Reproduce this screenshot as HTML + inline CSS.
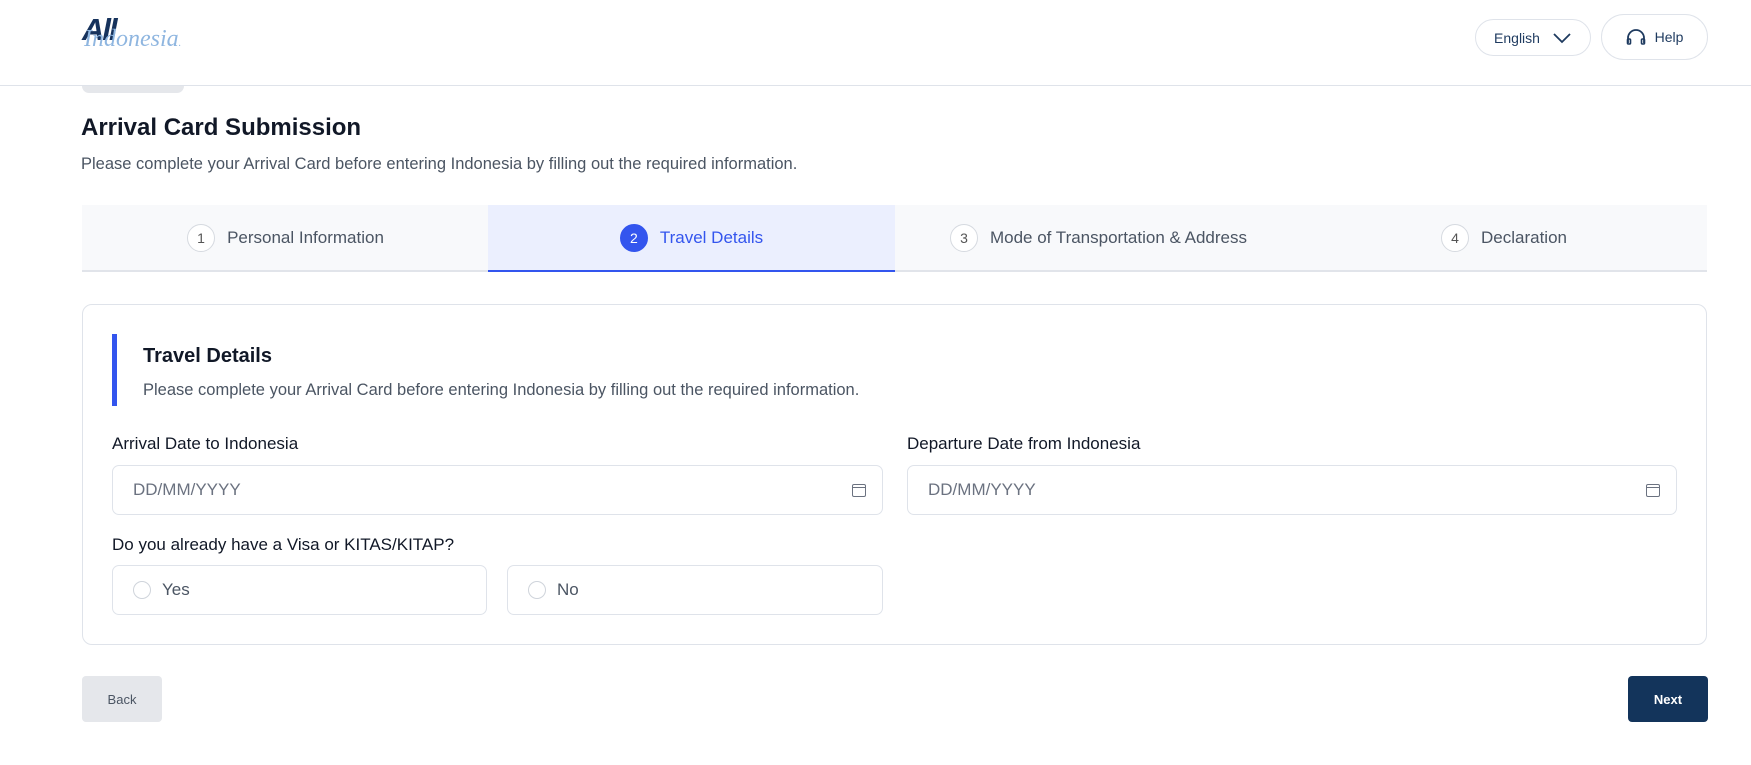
<!DOCTYPE html>
<html><head><meta charset="utf-8"><style>
*{box-sizing:border-box;margin:0;padding:0}
body{width:1751px;height:765px;overflow:hidden;background:#fff;font-family:"Liberation Sans",Arial,sans-serif;position:relative;color:#111827}
.a{position:absolute}
.hdr{left:0;top:0;width:1751px;height:86px;border-bottom:1px solid #dfe3ea;background:#fff}
.pill{border:1px solid #dfe3ea;border-radius:30px;display:flex;align-items:center;justify-content:center;font-size:14px;color:#1e3a5f}
.step{top:205px;height:67px;width:407px;background:#f8f9fb;border-bottom:2px solid #e1e4ea;display:flex;align-items:center;justify-content:center;font-size:17px;color:#4b5563}
.num{width:28px;height:28px;border-radius:50%;border:1px solid #d6dae0;display:inline-flex;align-items:center;justify-content:center;font-size:14px;margin-right:12px;color:#555;background:#fff}
.card{left:82px;top:304px;width:1625px;height:341px;border:1px solid #dfe3ea;border-radius:10px}
.lbl{font-size:17px;color:#111827}
.inp{height:50px;border:1px solid #dfe3ea;border-radius:7px;font-size:17px;color:#6b7280;display:flex;align-items:center;padding-left:20px}
.cal{position:absolute;right:16px;top:18px;width:14px;height:13px;border:1.5px solid #6b7280;border-radius:2px}
.cal:before{content:"";position:absolute;left:0;right:0;top:2px;border-top:1.5px solid #6b7280}
.rad{width:18px;height:18px;border:1px solid #cfd4db;border-radius:50%;margin-right:11px}
</style></head><body>
<div class="a hdr"></div>
<div class="a" style="left:82px;top:12px;font-size:31px;font-weight:bold;color:#16325c;letter-spacing:-2px;font-style:italic">All</div>
<div class="a" style="left:84px;top:26px;font-size:24px;font-style:italic;color:#8fb6e0;font-family:'Liberation Serif',serif">Indonesia<span style="font-size:10px">.</span></div>
<div class="a pill" style="left:1475px;top:19px;width:116px;height:37px">English <svg width="20" height="12" style="margin-left:12px" viewBox="0 0 20 12"><path d="M2 2l8 8 8-8" fill="none" stroke="#1e3a5f" stroke-width="1.8"/></svg></div>
<div class="a pill" style="left:1601px;top:14px;width:107px;height:46px"><svg width="20" height="18" viewBox="0 0 20 18" style="margin-right:9px"><path d="M2 15V10a8 8 0 0116 0v5" fill="none" stroke="#1e3a5f" stroke-width="1.8"/><rect x="1.5" y="11" width="3" height="5" rx="1" fill="none" stroke="#1e3a5f" stroke-width="1.6"/><rect x="15.5" y="11" width="3" height="5" rx="1" fill="none" stroke="#1e3a5f" stroke-width="1.6"/></svg>Help</div>
<div class="a" style="left:82px;top:86px;width:102px;height:7px;background:#e5e7eb;border-radius:0 0 10px 10px"></div>
<div class="a" style="left:81px;top:114px;font-size:24px;font-weight:bold;color:#111827">Arrival Card Submission</div>
<div class="a" style="left:81px;top:155px;font-size:16.5px;color:#4b5563">Please complete your Arrival Card before entering Indonesia by filling out the required information.</div>
<div class="a step" style="left:82px"><span class="num">1</span>Personal Information</div>
<div class="a step" style="left:488px;background:#ebeffe;border-bottom:2px solid #3355ee;color:#3355ee"><span class="num" style="background:#3355ee;border-color:#3355ee;color:#fff">2</span>Travel Details</div>
<div class="a step" style="left:895px"><span class="num">3</span>Mode of Transportation &amp; Address</div>
<div class="a step" style="left:1301px;width:406px"><span class="num">4</span>Declaration</div>
<div class="a card"></div>
<div class="a" style="left:112px;top:334px;width:5px;height:72px;background:#3355ee"></div>
<div class="a" style="left:143px;top:345px;font-size:20px;font-weight:bold">Travel Details</div>
<div class="a" style="left:143px;top:381px;font-size:16.5px;color:#4b5563">Please complete your Arrival Card before entering Indonesia by filling out the required information.</div>
<div class="a lbl" style="left:112px;top:434px">Arrival Date to Indonesia</div>
<div class="a lbl" style="left:907px;top:434px">Departure Date from Indonesia</div>
<div class="a inp" style="left:112px;top:465px;width:771px">DD/MM/YYYY<span class="cal"></span></div>
<div class="a inp" style="left:907px;top:465px;width:770px">DD/MM/YYYY<span class="cal"></span></div>
<div class="a lbl" style="left:112px;top:535px">Do you already have a Visa or KITAS/KITAP?</div>
<div class="a inp" style="left:112px;top:565px;width:375px;color:#4b5563"><span class="rad"></span>Yes</div>
<div class="a inp" style="left:507px;top:565px;width:376px;color:#4b5563"><span class="rad"></span>No</div>
<div class="a" style="left:82px;top:676px;width:80px;height:46px;background:#e5e7eb;border-radius:4px;font-size:13px;color:#4b5563;display:flex;align-items:center;justify-content:center">Back</div>
<div class="a" style="left:1628px;top:676px;width:80px;height:46px;background:#13345b;border-radius:4px;font-size:13px;font-weight:bold;color:#fff;display:flex;align-items:center;justify-content:center">Next</div>
</body></html>
